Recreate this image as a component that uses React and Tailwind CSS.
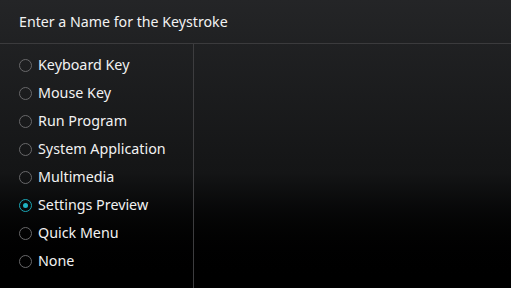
const options = [
  'Keyboard Key',
  'Mouse Key',
  'Run Program',
  'System Application',
  'Multimedia',
  'Settings Preview',
  'Quick Menu',
  'None',
]

function Radio({ checked }) {
  if (checked) {
    return (
      <span className="flex h-[13px] w-[13px] shrink-0 items-center justify-center rounded-full border-[1.5px] border-[#1aa5b4]">
        <span className="h-[5px] w-[5px] rounded-full bg-[#1fb3c2]" />
      </span>
    )
  }
  return <span className="h-[13px] w-[13px] shrink-0 rounded-full border-[1.5px] border-[#68686a]" />
}

export default function App() {
  const selected = 'Settings Preview'

  return (
    <div className="flex h-[288px] w-[511px] flex-col bg-gradient-to-b from-[#242527] via-[#141516] via-60% to-[#000000] font-['Noto_Sans',sans-serif] text-[#f2f2f2]">
      <div className="flex h-[44px] shrink-0 items-center border-b border-[#3b3b3d] pl-[19px] text-[14.2px]">
        Enter a Name for the Keystroke
      </div>
      <div className="flex flex-1">
        <div className="w-[194px] border-r border-[#3d3d3f] pt-[7px]">
          {options.map((opt) => (
            <label key={opt} className="flex h-[28px] items-center gap-[6px] pl-[19px] text-[14.3px]">
              <Radio checked={opt === selected} />
              <span>{opt}</span>
            </label>
          ))}
        </div>
        <div className="flex-1" />
      </div>
    </div>
  )
}
